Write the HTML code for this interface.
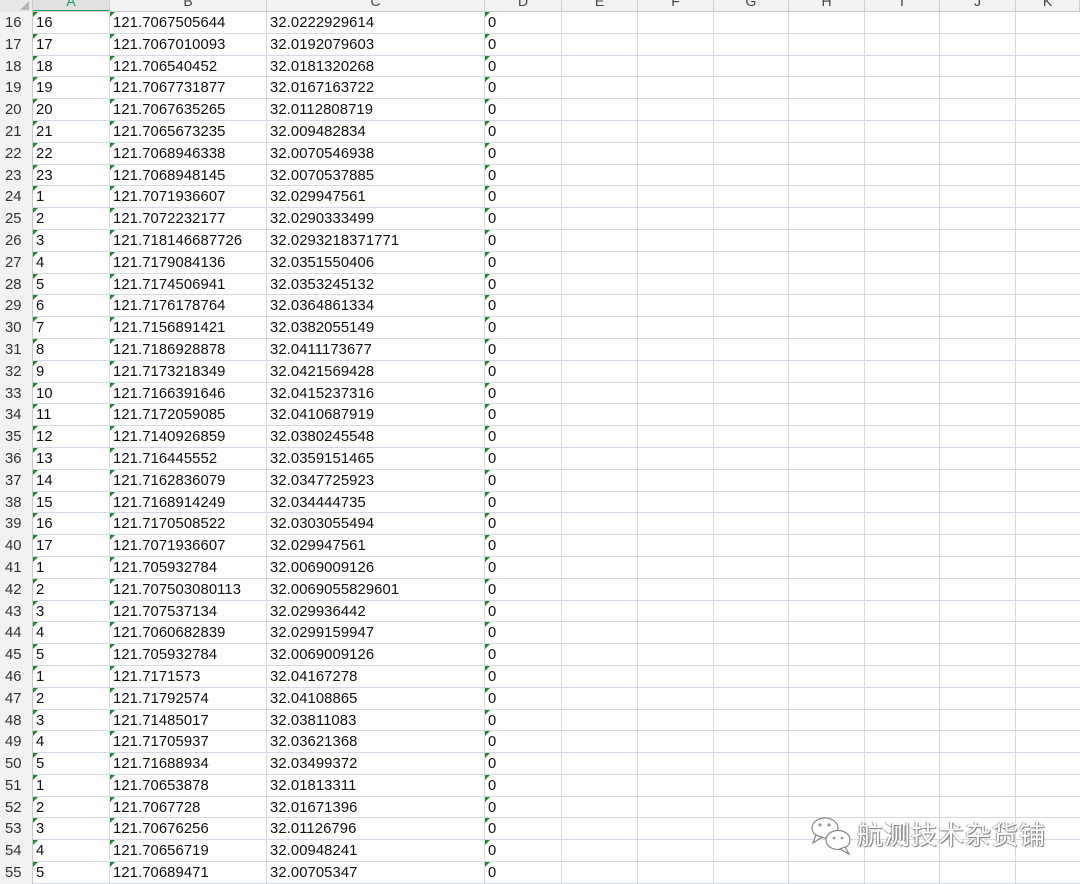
<!DOCTYPE html>
<html><head><meta charset="utf-8"><style>
*{margin:0;padding:0;box-sizing:border-box}
body{width:1080px;height:883px;overflow:hidden;background:#fff;font-family:"Liberation Sans","Noto Sans CJK SC",sans-serif;position:relative}
.hdr{position:absolute;left:0;top:0;width:1080px;height:12px;background:#f2f2f2;border-bottom:1px solid #c9c9c9;overflow:hidden}
.hdr span{position:absolute;top:-7px;height:19px;font-size:14px;color:#444;text-align:center;border-right:1px solid #d0d0d0}
.hdr span.sel{background:#e1e1e1;color:#21a366;border-bottom:2px solid #21a366}
.corner{position:absolute;left:0;top:0;width:33px;height:12px;background:#e8e8e8;border-right:1px solid #c9c9c9}
.corner:after{content:"";position:absolute;right:3px;bottom:2px;border-left:9px solid transparent;border-bottom:9px solid #b5b5b5}
.rows{position:absolute;left:0;top:12px;width:1080px}
.r{height:21.8px;position:relative;font-size:14.8px;letter-spacing:0.1px;color:#111;border-bottom:1px solid #d4d8e8}
.r div{position:absolute;top:0;height:21.8px;line-height:22px;padding-left:3px;white-space:nowrap}
.n{left:0;width:33px;background:#f2f2f2;color:#333;padding-left:5px!important;letter-spacing:0;border-right:1px solid #c9c9c9}
.a{left:33px}.b{left:110px}.c{left:267px}.d{left:485px}
.t:before{content:"";position:absolute;left:0;top:0;border-top:5px solid #1e8a2a;border-right:5px solid transparent}
.vl{position:absolute;top:0;bottom:0;width:1px;background:#d6d9e6}
.wm{position:absolute;left:857px;top:817px;font-size:26px;color:#fff;text-shadow:1px 1px 1px #777,-1px 0 1px #999;letter-spacing:1px;font-family:"Noto Sans CJK SC",sans-serif;line-height:34px}
</style></head><body>
<div class="vl" style="left:109px"></div><div class="vl" style="left:266px"></div><div class="vl" style="left:484px"></div><div class="vl" style="left:561px"></div><div class="vl" style="left:637px"></div><div class="vl" style="left:713px"></div><div class="vl" style="left:788px"></div><div class="vl" style="left:864px"></div><div class="vl" style="left:939px"></div><div class="vl" style="left:1015px"></div>
<div class="rows">
<div class="r"><div class="n">16</div><div class="a t">16</div><div class="b t">121.7067505644</div><div class="c">32.0222929614</div><div class="d t">0</div></div>
<div class="r"><div class="n">17</div><div class="a t">17</div><div class="b t">121.7067010093</div><div class="c">32.0192079603</div><div class="d t">0</div></div>
<div class="r"><div class="n">18</div><div class="a t">18</div><div class="b t">121.706540452</div><div class="c">32.0181320268</div><div class="d t">0</div></div>
<div class="r"><div class="n">19</div><div class="a t">19</div><div class="b t">121.7067731877</div><div class="c">32.0167163722</div><div class="d t">0</div></div>
<div class="r"><div class="n">20</div><div class="a t">20</div><div class="b t">121.7067635265</div><div class="c">32.0112808719</div><div class="d t">0</div></div>
<div class="r"><div class="n">21</div><div class="a t">21</div><div class="b t">121.7065673235</div><div class="c">32.009482834</div><div class="d t">0</div></div>
<div class="r"><div class="n">22</div><div class="a t">22</div><div class="b t">121.7068946338</div><div class="c">32.0070546938</div><div class="d t">0</div></div>
<div class="r"><div class="n">23</div><div class="a t">23</div><div class="b t">121.7068948145</div><div class="c">32.0070537885</div><div class="d t">0</div></div>
<div class="r"><div class="n">24</div><div class="a t">1</div><div class="b t">121.7071936607</div><div class="c">32.029947561</div><div class="d t">0</div></div>
<div class="r"><div class="n">25</div><div class="a t">2</div><div class="b t">121.7072232177</div><div class="c">32.0290333499</div><div class="d t">0</div></div>
<div class="r"><div class="n">26</div><div class="a t">3</div><div class="b t">121.718146687726</div><div class="c">32.0293218371771</div><div class="d t">0</div></div>
<div class="r"><div class="n">27</div><div class="a t">4</div><div class="b t">121.7179084136</div><div class="c">32.0351550406</div><div class="d t">0</div></div>
<div class="r"><div class="n">28</div><div class="a t">5</div><div class="b t">121.7174506941</div><div class="c">32.0353245132</div><div class="d t">0</div></div>
<div class="r"><div class="n">29</div><div class="a t">6</div><div class="b t">121.7176178764</div><div class="c">32.0364861334</div><div class="d t">0</div></div>
<div class="r"><div class="n">30</div><div class="a t">7</div><div class="b t">121.7156891421</div><div class="c">32.0382055149</div><div class="d t">0</div></div>
<div class="r"><div class="n">31</div><div class="a t">8</div><div class="b t">121.7186928878</div><div class="c">32.0411173677</div><div class="d t">0</div></div>
<div class="r"><div class="n">32</div><div class="a t">9</div><div class="b t">121.7173218349</div><div class="c">32.0421569428</div><div class="d t">0</div></div>
<div class="r"><div class="n">33</div><div class="a t">10</div><div class="b t">121.7166391646</div><div class="c">32.0415237316</div><div class="d t">0</div></div>
<div class="r"><div class="n">34</div><div class="a t">11</div><div class="b t">121.7172059085</div><div class="c">32.0410687919</div><div class="d t">0</div></div>
<div class="r"><div class="n">35</div><div class="a t">12</div><div class="b t">121.7140926859</div><div class="c">32.0380245548</div><div class="d t">0</div></div>
<div class="r"><div class="n">36</div><div class="a t">13</div><div class="b t">121.716445552</div><div class="c">32.0359151465</div><div class="d t">0</div></div>
<div class="r"><div class="n">37</div><div class="a t">14</div><div class="b t">121.7162836079</div><div class="c">32.0347725923</div><div class="d t">0</div></div>
<div class="r"><div class="n">38</div><div class="a t">15</div><div class="b t">121.7168914249</div><div class="c">32.034444735</div><div class="d t">0</div></div>
<div class="r"><div class="n">39</div><div class="a t">16</div><div class="b t">121.7170508522</div><div class="c">32.0303055494</div><div class="d t">0</div></div>
<div class="r"><div class="n">40</div><div class="a t">17</div><div class="b t">121.7071936607</div><div class="c">32.029947561</div><div class="d t">0</div></div>
<div class="r"><div class="n">41</div><div class="a t">1</div><div class="b t">121.705932784</div><div class="c">32.0069009126</div><div class="d t">0</div></div>
<div class="r"><div class="n">42</div><div class="a t">2</div><div class="b t">121.707503080113</div><div class="c">32.0069055829601</div><div class="d t">0</div></div>
<div class="r"><div class="n">43</div><div class="a t">3</div><div class="b t">121.707537134</div><div class="c">32.029936442</div><div class="d t">0</div></div>
<div class="r"><div class="n">44</div><div class="a t">4</div><div class="b t">121.7060682839</div><div class="c">32.0299159947</div><div class="d t">0</div></div>
<div class="r"><div class="n">45</div><div class="a t">5</div><div class="b t">121.705932784</div><div class="c">32.0069009126</div><div class="d t">0</div></div>
<div class="r"><div class="n">46</div><div class="a t">1</div><div class="b t">121.7171573</div><div class="c">32.04167278</div><div class="d t">0</div></div>
<div class="r"><div class="n">47</div><div class="a t">2</div><div class="b t">121.71792574</div><div class="c">32.04108865</div><div class="d t">0</div></div>
<div class="r"><div class="n">48</div><div class="a t">3</div><div class="b t">121.71485017</div><div class="c">32.03811083</div><div class="d t">0</div></div>
<div class="r"><div class="n">49</div><div class="a t">4</div><div class="b t">121.71705937</div><div class="c">32.03621368</div><div class="d t">0</div></div>
<div class="r"><div class="n">50</div><div class="a t">5</div><div class="b t">121.71688934</div><div class="c">32.03499372</div><div class="d t">0</div></div>
<div class="r"><div class="n">51</div><div class="a t">1</div><div class="b t">121.70653878</div><div class="c">32.01813311</div><div class="d t">0</div></div>
<div class="r"><div class="n">52</div><div class="a t">2</div><div class="b t">121.7067728</div><div class="c">32.01671396</div><div class="d t">0</div></div>
<div class="r"><div class="n">53</div><div class="a t">3</div><div class="b t">121.70676256</div><div class="c">32.01126796</div><div class="d t">0</div></div>
<div class="r"><div class="n">54</div><div class="a t">4</div><div class="b t">121.70656719</div><div class="c">32.00948241</div><div class="d t">0</div></div>
<div class="r"><div class="n">55</div><div class="a t">5</div><div class="b t">121.70689471</div><div class="c">32.00705347</div><div class="d t">0</div></div>
</div>
<div class="hdr">
<span class="sel" style="left:33px;width:77px">A</span>
<span style="left:110px;width:157px">B</span>
<span style="left:267px;width:218px">C</span>
<span style="left:485px;width:77px">D</span>
<span style="left:562px;width:76px">E</span>
<span style="left:638px;width:76px">F</span>
<span style="left:714px;width:75px">G</span>
<span style="left:789px;width:76px">H</span>
<span style="left:865px;width:75px">I</span>
<span style="left:940px;width:76px">J</span>
<span style="left:1016px;width:64px">K</span>
</div>
<div class="corner"></div>
<svg style="position:absolute;left:808px;top:814px" width="48" height="42" viewBox="0 0 48 42">
<g fill="#fff" stroke="#888" stroke-width="1.2">
<ellipse cx="17" cy="14" rx="13" ry="10"/>
<path d="M8 21 L5 29 L14 23Z"/>
<ellipse cx="30" cy="26" rx="12" ry="9.5"/>
<path d="M37 33 L41 40 L32 35Z"/>
</g>
<g fill="#999"><circle cx="12" cy="11" r="1.6"/><circle cx="21" cy="11" r="1.6"/><circle cx="26" cy="24" r="1.4"/><circle cx="34" cy="24" r="1.4"/></g>
</svg>
<div class="wm">航测技术杂货铺</div>
</body></html>
